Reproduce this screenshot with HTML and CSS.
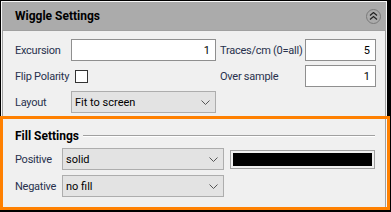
FILE: index.html
```html
<!DOCTYPE html>
<html lang="en">
<head>
    <meta charset="UTF-8">
    <title>Wiggle Settings</title>
    <link rel="stylesheet" href="styles.css">
</head>
<body>
    <div class="window">
        <div class="header">
            <span class="title">Wiggle Settings</span>
            <span class="collapse">
                <svg width="9" height="8" viewBox="0 0 9 8">
                    <polyline points="1,3.5 4.5,0.5 8,3.5" fill="none" stroke="#222" stroke-width="1.2"/>
                    <polyline points="1,7.5 4.5,4.5 8,7.5" fill="none" stroke="#222" stroke-width="1.2"/>
                </svg>
            </span>
        </div>
        <div class="panel">
            <div class="grid">
                <label class="lbl">Excursion</label>
                <input class="num" type="text" value="1">
                <label class="lbl lbl2">Traces/cm (0=all)</label>
                <input class="num" type="text" value="5">

                <label class="lbl">Flip Polarity</label>
                <span class="check"></span>
                <label class="lbl lbl2">Over sample</label>
                <input class="num" type="text" value="1">

                <label class="lbl">Layout</label>
                <div class="select">
                    <span>Fit to screen</span>
                    <svg class="chev" width="9" height="5" viewBox="0 0 9 5"><polyline points="0.5,0.5 4.5,4.5 8.5,0.5" fill="none" stroke="#555" stroke-width="1"/></svg>
                </div>
            </div>

            <div class="group">
                <div class="group-title"><span>Fill Settings</span></div>
                <div class="fill-grid">
                    <label class="lbl">Positive</label>
                    <div class="select">
                        <span>solid</span>
                        <svg class="chev" width="9" height="5" viewBox="0 0 9 5"><polyline points="0.5,0.5 4.5,4.5 8.5,0.5" fill="none" stroke="#555" stroke-width="1"/></svg>
                    </div>
                    <div class="swatch"><div class="swatch-color"></div></div>

                    <label class="lbl">Negative</label>
                    <div class="select">
                        <span>no fill</span>
                        <svg class="chev" width="9" height="5" viewBox="0 0 9 5"><polyline points="0.5,0.5 4.5,4.5 8.5,0.5" fill="none" stroke="#555" stroke-width="1"/></svg>
                    </div>
                </div>
            </div>
        </div>
    </div>

    <!-- highlight box around the fill group -->
    <div class="highlight"></div>
</body>
</html>
```

FILE: styles.css
```css
body {
    margin: 0;
    width: 391px;
    height: 212px;
    overflow: hidden;
    background-color: #000;
    position: relative;
    font-family: Roboto, "Liberation Sans", sans-serif;
    font-size: 11px;
}

.window {
    margin: 1px 0 0 1px;
    width: 386px;
    height: 209px;
    box-sizing: border-box;
    border: 1px solid #f7f7f7;
    background-color: #f0f0f0;
    display: flex;
    flex-direction: column;
}

.header {
    height: 28px;
    flex: none;
    background-color: #ababab;
    display: flex;
    align-items: center;
    justify-content: space-between;
    padding: 0 5px 0 13px;
}

.title {
    font-weight: bold;
    font-size: 12px;
    color: #000;
}

.collapse {
    width: 13px;
    height: 13px;
    border: 1px solid #7a7a7a;
    border-radius: 50%;
    display: flex;
    align-items: center;
    justify-content: center;
}

.panel {
    flex: 1;
    border: 1px solid #a0a0a0;
    padding: 8px 0 0 12px;
}

.grid {
    display: grid;
    grid-template-columns: 56px 145px 89px 71px;
    grid-template-rows: 22px 22px 22px;
    row-gap: 4px;
    align-items: center;
}

.lbl {
    color: #28314d;
    white-space: nowrap;
    letter-spacing: -0.25px;
}

.lbl2 {
    padding-left: 4px;
}

.num {
    box-sizing: border-box;
    width: 100%;
    height: 22px;
    margin: 0;
    border: 1px solid #8f8f8f;
    background-color: #fff;
    text-align: right;
    padding: 0 5px;
    font-family: inherit;
    font-size: 11px;
    color: #000;
    outline: none;
}

.check {
    width: 11px;
    height: 11px;
    margin-left: 4px;
    border: 1px solid #333;
    background-color: #fff;
}

.select {
    box-sizing: border-box;
    height: 22px;
    border: 1px solid #adadad;
    background-color: #e3e3e3;
    display: flex;
    align-items: center;
    justify-content: space-between;
    padding: 0 5px 0 3px;
    color: #000;
}

.group {
    margin-top: 16px;
    width: 360px;
}

.group-title {
    display: flex;
    align-items: center;
    gap: 4px;
    height: 14px;
    font-weight: bold;
    font-size: 12px;
    color: #000;
}

.group-title::after {
    content: "";
    flex: 1;
    border-top: 1px solid #a0a0a0;
    border-bottom: 1px solid #fff;
}

.fill-grid {
    margin-top: 5px;
    display: grid;
    grid-template-columns: 47px 162px 151px;
    grid-template-rows: 22px 22px;
    row-gap: 5px;
    align-items: center;
}

.swatch {
    margin-left: 6px;
    width: 145px;
    height: 19px;
    box-sizing: border-box;
    border: 1px solid #a0a0a0;
    padding: 2px;
}

.swatch-color {
    height: 100%;
    background-color: #000;
}

.highlight {
    position: absolute;
    left: 0;
    top: 116px;
    width: 390px;
    height: 94px;
    box-sizing: border-box;
    border: 3px solid #ff8000;
}
```
